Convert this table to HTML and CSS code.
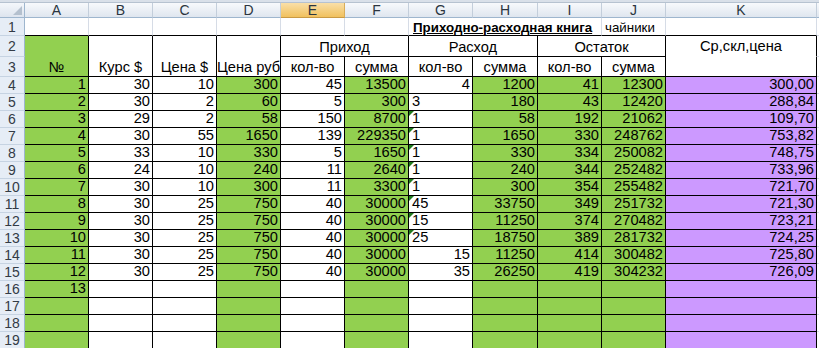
FILE: index.html
```html
<!DOCTYPE html>
<html lang="ru">
<head>
<meta charset="utf-8">
<title>Приходно-расходная книга</title>
<link rel="stylesheet" href="styles.css">
</head>
<body>
<div class="edge"></div>
<div class="sheet">
  <!-- column headers -->
  <div class="corner"><span class="corner-tri"></span></div>
  <div class="ch">A</div><div class="ch">B</div><div class="ch">C</div><div class="ch">D</div>
  <div class="ch sel">E</div><div class="ch">F</div><div class="ch">G</div><div class="ch">H</div>
  <div class="ch">I</div><div class="ch">J</div><div class="ch">K</div><div class="ch"></div>

  <!-- row 1 -->
  <div class="rh">1</div>
  <div class="c bb"></div><div class="c bb"></div><div class="c bb"></div><div class="c bb"></div>
  <div class="c bb"></div><div class="c bb"></div>
  <div class="c bb title span3">Приходно-расходная книга</div>
  <div class="c bb note">чайники</div>
  <div class="c bb"></div>
  <div class="c"></div>

  <!-- rows 2-3 header -->
  <div class="rh">2</div>
  <div class="c b g hd rows2">№</div>
  <div class="c b hd rows2">Курс $</div>
  <div class="c b hd rows2">Цена $</div>
  <div class="c b hd rows2">Цена руб</div>
  <div class="c b hd span2">Приход</div>
  <div class="c b hd span2">Расход</div>
  <div class="c b hd span2">Остаток</div>
  <div class="c br hd k2">Ср,скл,цена</div>
  <div class="c"></div>

  <div class="rh">3</div>
  <div class="c b hd">кол-во</div>
  <div class="c b hd">сумма</div>
  <div class="c b hd">кол-во</div>
  <div class="c b hd">сумма</div>
  <div class="c b hd">кол-во</div>
  <div class="c b hd">сумма</div>
  <div class="c b"></div>
  <div class="c"></div>

  <!-- data rows -->
  <div class="rh">4</div>
  <div class="c b g n">1</div><div class="c b n">30</div><div class="c b n">10</div><div class="c b g n">300</div>
  <div class="c b n">45</div><div class="c b g n">13500</div><div class="c b n">4</div><div class="c b g n">1200</div>
  <div class="c b g n">41</div><div class="c b g n">12300</div><div class="c b p n">300,00</div><div class="c"></div>

  <div class="rh">5</div>
  <div class="c b g n">2</div><div class="c b n">30</div><div class="c b n">2</div><div class="c b g n">60</div>
  <div class="c b n">5</div><div class="c b g n">300</div><div class="c b tx">3</div><div class="c b g n">180</div>
  <div class="c b g n">43</div><div class="c b g n">12420</div><div class="c b p n">288,84</div><div class="c"></div>

  <div class="rh">6</div>
  <div class="c b g n">3</div><div class="c b n">29</div><div class="c b n">2</div><div class="c b g n">58</div>
  <div class="c b n">150</div><div class="c b g n">8700</div><div class="c b tx tri">1</div><div class="c b g n">58</div>
  <div class="c b g n">192</div><div class="c b g n">21062</div><div class="c b p n">109,70</div><div class="c"></div>

  <div class="rh">7</div>
  <div class="c b g n">4</div><div class="c b n">30</div><div class="c b n">55</div><div class="c b g n">1650</div>
  <div class="c b n">139</div><div class="c b g n">229350</div><div class="c b tx tri">1</div><div class="c b g n">1650</div>
  <div class="c b g n">330</div><div class="c b g n">248762</div><div class="c b p n">753,82</div><div class="c"></div>

  <div class="rh">8</div>
  <div class="c b g n">5</div><div class="c b n">33</div><div class="c b n">10</div><div class="c b g n">330</div>
  <div class="c b n">5</div><div class="c b g n">1650</div><div class="c b tx tri">1</div><div class="c b g n">330</div>
  <div class="c b g n">334</div><div class="c b g n">250082</div><div class="c b p n">748,75</div><div class="c"></div>

  <div class="rh">9</div>
  <div class="c b g n">6</div><div class="c b n">24</div><div class="c b n">10</div><div class="c b g n">240</div>
  <div class="c b n">11</div><div class="c b g n">2640</div><div class="c b tx tri">1</div><div class="c b g n">240</div>
  <div class="c b g n">344</div><div class="c b g n">252482</div><div class="c b p n">733,96</div><div class="c"></div>

  <div class="rh">10</div>
  <div class="c b g n">7</div><div class="c b n">30</div><div class="c b n">10</div><div class="c b g n">300</div>
  <div class="c b n">11</div><div class="c b g n">3300</div><div class="c b tx tri">1</div><div class="c b g n">300</div>
  <div class="c b g n">354</div><div class="c b g n">255482</div><div class="c b p n">721,70</div><div class="c"></div>

  <div class="rh">11</div>
  <div class="c b g n">8</div><div class="c b n">30</div><div class="c b n">25</div><div class="c b g n">750</div>
  <div class="c b n">40</div><div class="c b g n">30000</div><div class="c b tx tri">45</div><div class="c b g n">33750</div>
  <div class="c b g n">349</div><div class="c b g n">251732</div><div class="c b p n">721,30</div><div class="c"></div>

  <div class="rh">12</div>
  <div class="c b g n">9</div><div class="c b n">30</div><div class="c b n">25</div><div class="c b g n">750</div>
  <div class="c b n">40</div><div class="c b g n">30000</div><div class="c b tx tri">15</div><div class="c b g n">11250</div>
  <div class="c b g n">374</div><div class="c b g n">270482</div><div class="c b p n">723,21</div><div class="c"></div>

  <div class="rh">13</div>
  <div class="c b g n">10</div><div class="c b n">30</div><div class="c b n">25</div><div class="c b g n">750</div>
  <div class="c b n">40</div><div class="c b g n">30000</div><div class="c b tx tri">25</div><div class="c b g n">18750</div>
  <div class="c b g n">389</div><div class="c b g n">281732</div><div class="c b p n">724,25</div><div class="c"></div>

  <div class="rh">14</div>
  <div class="c b g n">11</div><div class="c b n">30</div><div class="c b n">25</div><div class="c b g n">750</div>
  <div class="c b n">40</div><div class="c b g n">30000</div><div class="c b n">15</div><div class="c b g n">11250</div>
  <div class="c b g n">414</div><div class="c b g n">300482</div><div class="c b p n">725,80</div><div class="c"></div>

  <div class="rh">15</div>
  <div class="c b g n">12</div><div class="c b n">30</div><div class="c b n">25</div><div class="c b g n">750</div>
  <div class="c b n">40</div><div class="c b g n">30000</div><div class="c b n">35</div><div class="c b g n">26250</div>
  <div class="c b g n">419</div><div class="c b g n">304232</div><div class="c b p n">726,09</div><div class="c"></div>

  <div class="rh">16</div>
  <div class="c b g n">13</div><div class="c b"></div><div class="c b"></div><div class="c b g"></div>
  <div class="c b"></div><div class="c b g"></div><div class="c b"></div><div class="c b g"></div>
  <div class="c b g"></div><div class="c b g"></div><div class="c b p"></div><div class="c"></div>

  <div class="rh">17</div>
  <div class="c b g"></div><div class="c b"></div><div class="c b"></div><div class="c b g"></div>
  <div class="c b"></div><div class="c b g"></div><div class="c b"></div><div class="c b g"></div>
  <div class="c b g"></div><div class="c b g"></div><div class="c b p"></div><div class="c"></div>

  <div class="rh">18</div>
  <div class="c b g"></div><div class="c b"></div><div class="c b"></div><div class="c b g"></div>
  <div class="c b"></div><div class="c b g"></div><div class="c b"></div><div class="c b g"></div>
  <div class="c b g"></div><div class="c b g"></div><div class="c b p"></div><div class="c"></div>

  <div class="rh">19</div>
  <div class="c b g"></div><div class="c b"></div><div class="c b"></div><div class="c b g"></div>
  <div class="c b"></div><div class="c b g"></div><div class="c b"></div><div class="c b g"></div>
  <div class="c b g"></div><div class="c b g"></div><div class="c b p"></div><div class="c"></div>
</div>
</body>
</html>
```

FILE: styles.css
```css
* { box-sizing: border-box; }

html, body {
  margin: 0;
  padding: 0;
  background: #ffffff;
  overflow: hidden;
}

body {
  width: 819px;
  height: 348px;
  font-family: "Liberation Sans", Arial, sans-serif;
  color: #000;
}

.edge {
  height: 3px;
  background: #d9e0e9;
  border-bottom: 1px solid #b6c2d0;
}

.sheet {
  display: grid;
  grid-template-columns: 25px repeat(7, 64px) 65px 64px 64px 151px 1fr;
  grid-template-rows: 15px 18px 21px 20px repeat(16, 17px);
}

/* headers */
.corner {
  position: relative;
  background: linear-gradient(#f4f7fb, #dde4ee);
  border-right: 1px solid #9eb6ce;
  border-bottom: 1px solid #9eb6ce;
}
.corner-tri {
  position: absolute;
  right: 2px;
  bottom: 2px;
  width: 0;
  height: 0;
  border-left: 9px solid transparent;
  border-bottom: 9px solid #b4c0ce;
}

.ch {
  display: flex;
  align-items: center;
  justify-content: center;
  background: linear-gradient(#f7f9fc, #dfe6ef);
  border-right: 1px solid #c3cedb;
  border-bottom: 1px solid #9eb6ce;
  font-size: 14px;
  line-height: 1;
  color: #2b3540;
}
.ch.sel {
  background: linear-gradient(#f9dfa8, #f1c15e);
  border-right-color: #d8ad5a;
  border-bottom-color: #c99a45;
}

.rh {
  display: flex;
  align-items: center;
  justify-content: center;
  background: #e6edf6;
  border-right: 1px solid #9eb6ce;
  border-bottom: 1px solid #c6d3e2;
  font-size: 14px;
  line-height: 1;
  color: #333b45;
}

/* cells */
.c {
  position: relative;
  display: flex;
  align-items: flex-end;
  padding: 0 2px;
  border-right: 1px solid #d6dce6;
  border-bottom: 1px solid #d6dce6;
  overflow: hidden;
  white-space: nowrap;
  font-family: "Liberation Sans Narrow", "Arial Narrow", "Liberation Sans", sans-serif;
  font-size: 11pt;
  line-height: 1.15;
}

.b { border-right-color: #000; border-bottom-color: #000; }
.bb { border-bottom-color: #000; }
.br { border-right-color: #000; border-bottom-color: transparent; }

.g { background: #92d050; }
.p { background: #cc99ff; }

.n { justify-content: flex-end; }
.tx { justify-content: flex-start; padding-left: 3px; }

.tri::before {
  content: "";
  position: absolute;
  top: 0;
  left: 0;
  border-top: 5px solid #1e7b1e;
  border-right: 5px solid transparent;
}

.hd {
  justify-content: center;
  font-family: "Liberation Sans", Arial, sans-serif;
  font-size: 11pt;
}
.rows2 { grid-row: span 2; }
.span2 { grid-column: span 2; }
.span3 { grid-column: span 3; }

.title {
  padding-left: 4px;
  font-family: "Liberation Sans", Arial, sans-serif;
  font-size: 10pt;
  font-weight: bold;
  text-decoration: underline;
}
.note {
  padding-left: 3px;
  font-family: "Liberation Sans", Arial, sans-serif;
  font-size: 10pt;
}
.k2 { padding-bottom: 1px; }
```
